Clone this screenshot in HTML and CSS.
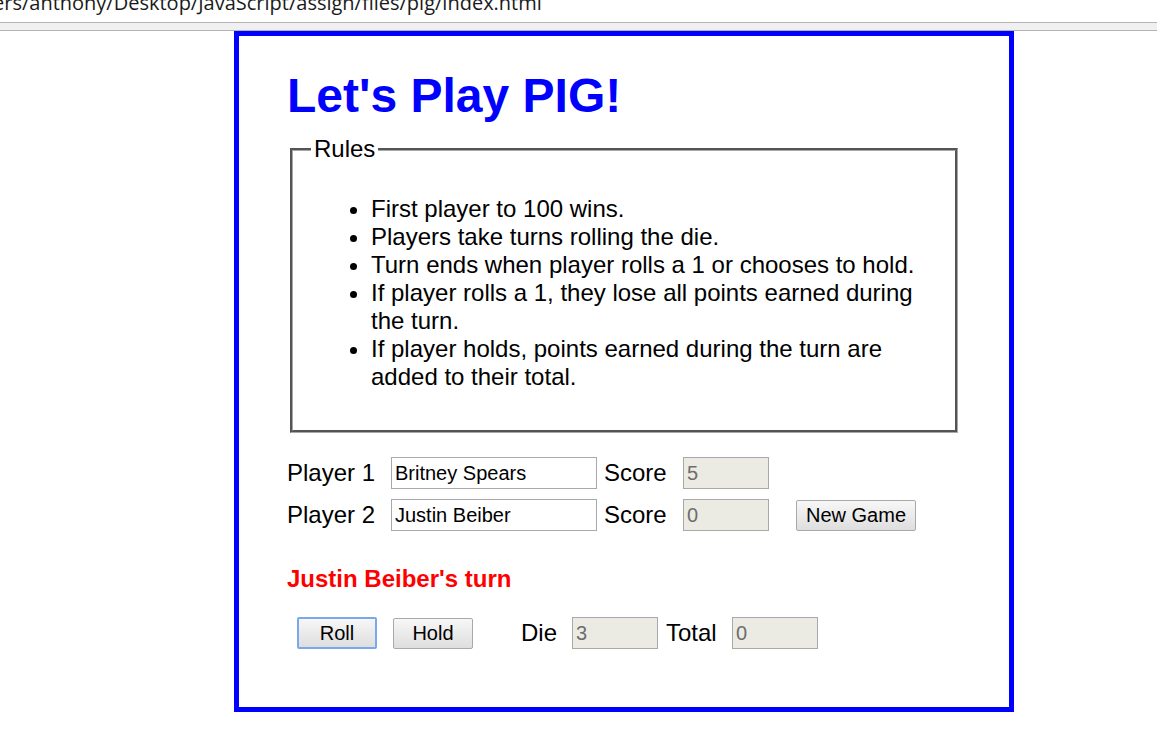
FILE: index.html
```html
<!DOCTYPE html>
<html>
<head>
<meta charset="utf-8">
<title>Let's Play PIG!</title>
<link rel="stylesheet" href="styles.css">
</head>
<body>
<div class="chrome">
  <div class="url-area"><div class="url">ers/anthony/Desktop/JavaScript/assign/files/pig/index.html</div></div>
  <div class="strip"></div>
</div>
<main class="game">
  <h1 class="title">Let's Play PIG!</h1>
  <fieldset class="rules">
    <legend class="rules-legend">Rules</legend>
    <ul class="rules-list">
      <li>First player to 100 wins.</li>
      <li>Players take turns rolling the die.</li>
      <li>Turn ends when player rolls a 1 or chooses to hold.</li>
      <li>If player rolls a 1, they lose all points earned during the turn.</li>
      <li>If player holds, points earned during the turn are added to their total.</li>
    </ul>
  </fieldset>
  <div class="row row-first">
    <label class="lbl lbl-player" for="p1">Player 1</label>
    <input class="field field-name" id="p1" type="text" value="Britney Spears">
    <label class="lbl lbl-score" for="s1">Score</label>
    <input class="field field-num" id="s1" type="text" value="5" disabled>
  </div>
  <div class="row row-second">
    <label class="lbl lbl-player" for="p2">Player 2</label>
    <input class="field field-name" id="p2" type="text" value="Justin Beiber">
    <label class="lbl lbl-score" for="s2">Score</label>
    <input class="field field-num" id="s2" type="text" value="0" disabled>
    <button class="btn btn-new" type="button">New Game</button>
  </div>
  <p class="turn">Justin Beiber's turn</p>
  <div class="row row-play">
    <button class="btn btn-roll" type="button">Roll</button>
    <button class="btn btn-hold" type="button">Hold</button>
    <label class="lbl lbl-die" for="die">Die</label>
    <input class="field field-num" id="die" type="text" value="3" disabled>
    <label class="lbl lbl-total" for="total">Total</label>
    <input class="field field-num" id="total" type="text" value="0" disabled>
  </div>
</main>
</body>
</html>
```
FILE: styles.css
```css
html, body {
  margin: 0;
  padding: 0;
  background: #ffffff;
}

body {
  font-family: "Liberation Sans", Arial, sans-serif;
  color: #000;
}

.chrome {
  height: 31px;
}

.url-area {
  height: 22px;
  overflow: hidden;
}

.url {
  font-family: "Open Sans", "Noto Sans", sans-serif;
  font-size: 20px;
  line-height: 20px;
  margin-top: -7px;
  text-indent: -7px;
  white-space: nowrap;
  color: #1a1a1a;
}

.strip {
  box-sizing: border-box;
  height: 9px;
  background: #f0f0f0;
  border-top: 1px solid #b4b4b4;
  border-bottom: 1px solid #b4b4b4;
}

.game {
  display: block;
  width: 674px;
  margin: 0 0 0 234px;
  padding: 0 48px 58px 48px;
  border: 5px solid #0000ff;
}

.title {
  margin: 32px 0 11px 0;
  font-size: 48px;
  line-height: 56px;
  font-weight: bold;
  color: #0000ff;
}

.rules {
  margin: 0 3px;
  padding: 8px 18px 15px 18px;
  border: 3px groove #a8a8a8;
}

.rules-legend {
  padding: 0 3px;
  font-size: 24px;
  line-height: 28px;
}

.rules-list {
  margin: 24px 0;
  padding-left: 60px;
  font-size: 24px;
  line-height: 28px;
}

.row {
  display: flex;
  align-items: center;
  height: 32px;
}

.row-first {
  margin-top: 24px;
}

.row-second {
  margin-top: 10px;
}

.lbl {
  font-size: 24px;
  line-height: 28px;
  flex: none;
}

.lbl-player {
  width: 104px;
}

.lbl-score {
  margin-left: 7px;
  width: 79px;
}

.lbl-die {
  margin-left: 48px;
  width: 51px;
}

.lbl-total {
  margin-left: 8px;
  width: 66px;
}

.field {
  box-sizing: border-box;
  height: 32px;
  margin: 0;
  padding: 0 3px;
  border: 1px solid #a9a9a9;
  font-family: "Liberation Sans", Arial, sans-serif;
  font-size: 20px;
  color: #000;
  background: #fff;
  flex: none;
}

.field-name {
  width: 206px;
}

.field-num {
  width: 86px;
}

.field:disabled {
  background: #ebebe4;
  color: #6d6d6d;
}

.btn {
  box-sizing: border-box;
  height: 32px;
  margin: 0;
  padding: 0;
  border: 1px solid #a9a9a9;
  border-radius: 2px;
  background: linear-gradient(#f7f7f7, #dedede);
  font-family: "Liberation Sans", Arial, sans-serif;
  font-size: 20px;
  color: #000;
  flex: none;
}

.btn-new {
  margin-left: 27px;
  width: 120px;
  height: 31px;
}

.btn-roll {
  margin-left: 10px;
  width: 80px;
  border: 2px solid #7aa7ee;
}

.btn-hold {
  margin-left: 16px;
  width: 80px;
  height: 31px;
}

.turn {
  margin: 34px 0 24px 0;
  font-size: 24px;
  line-height: 28px;
  font-weight: bold;
  color: #ff0000;
}
```
